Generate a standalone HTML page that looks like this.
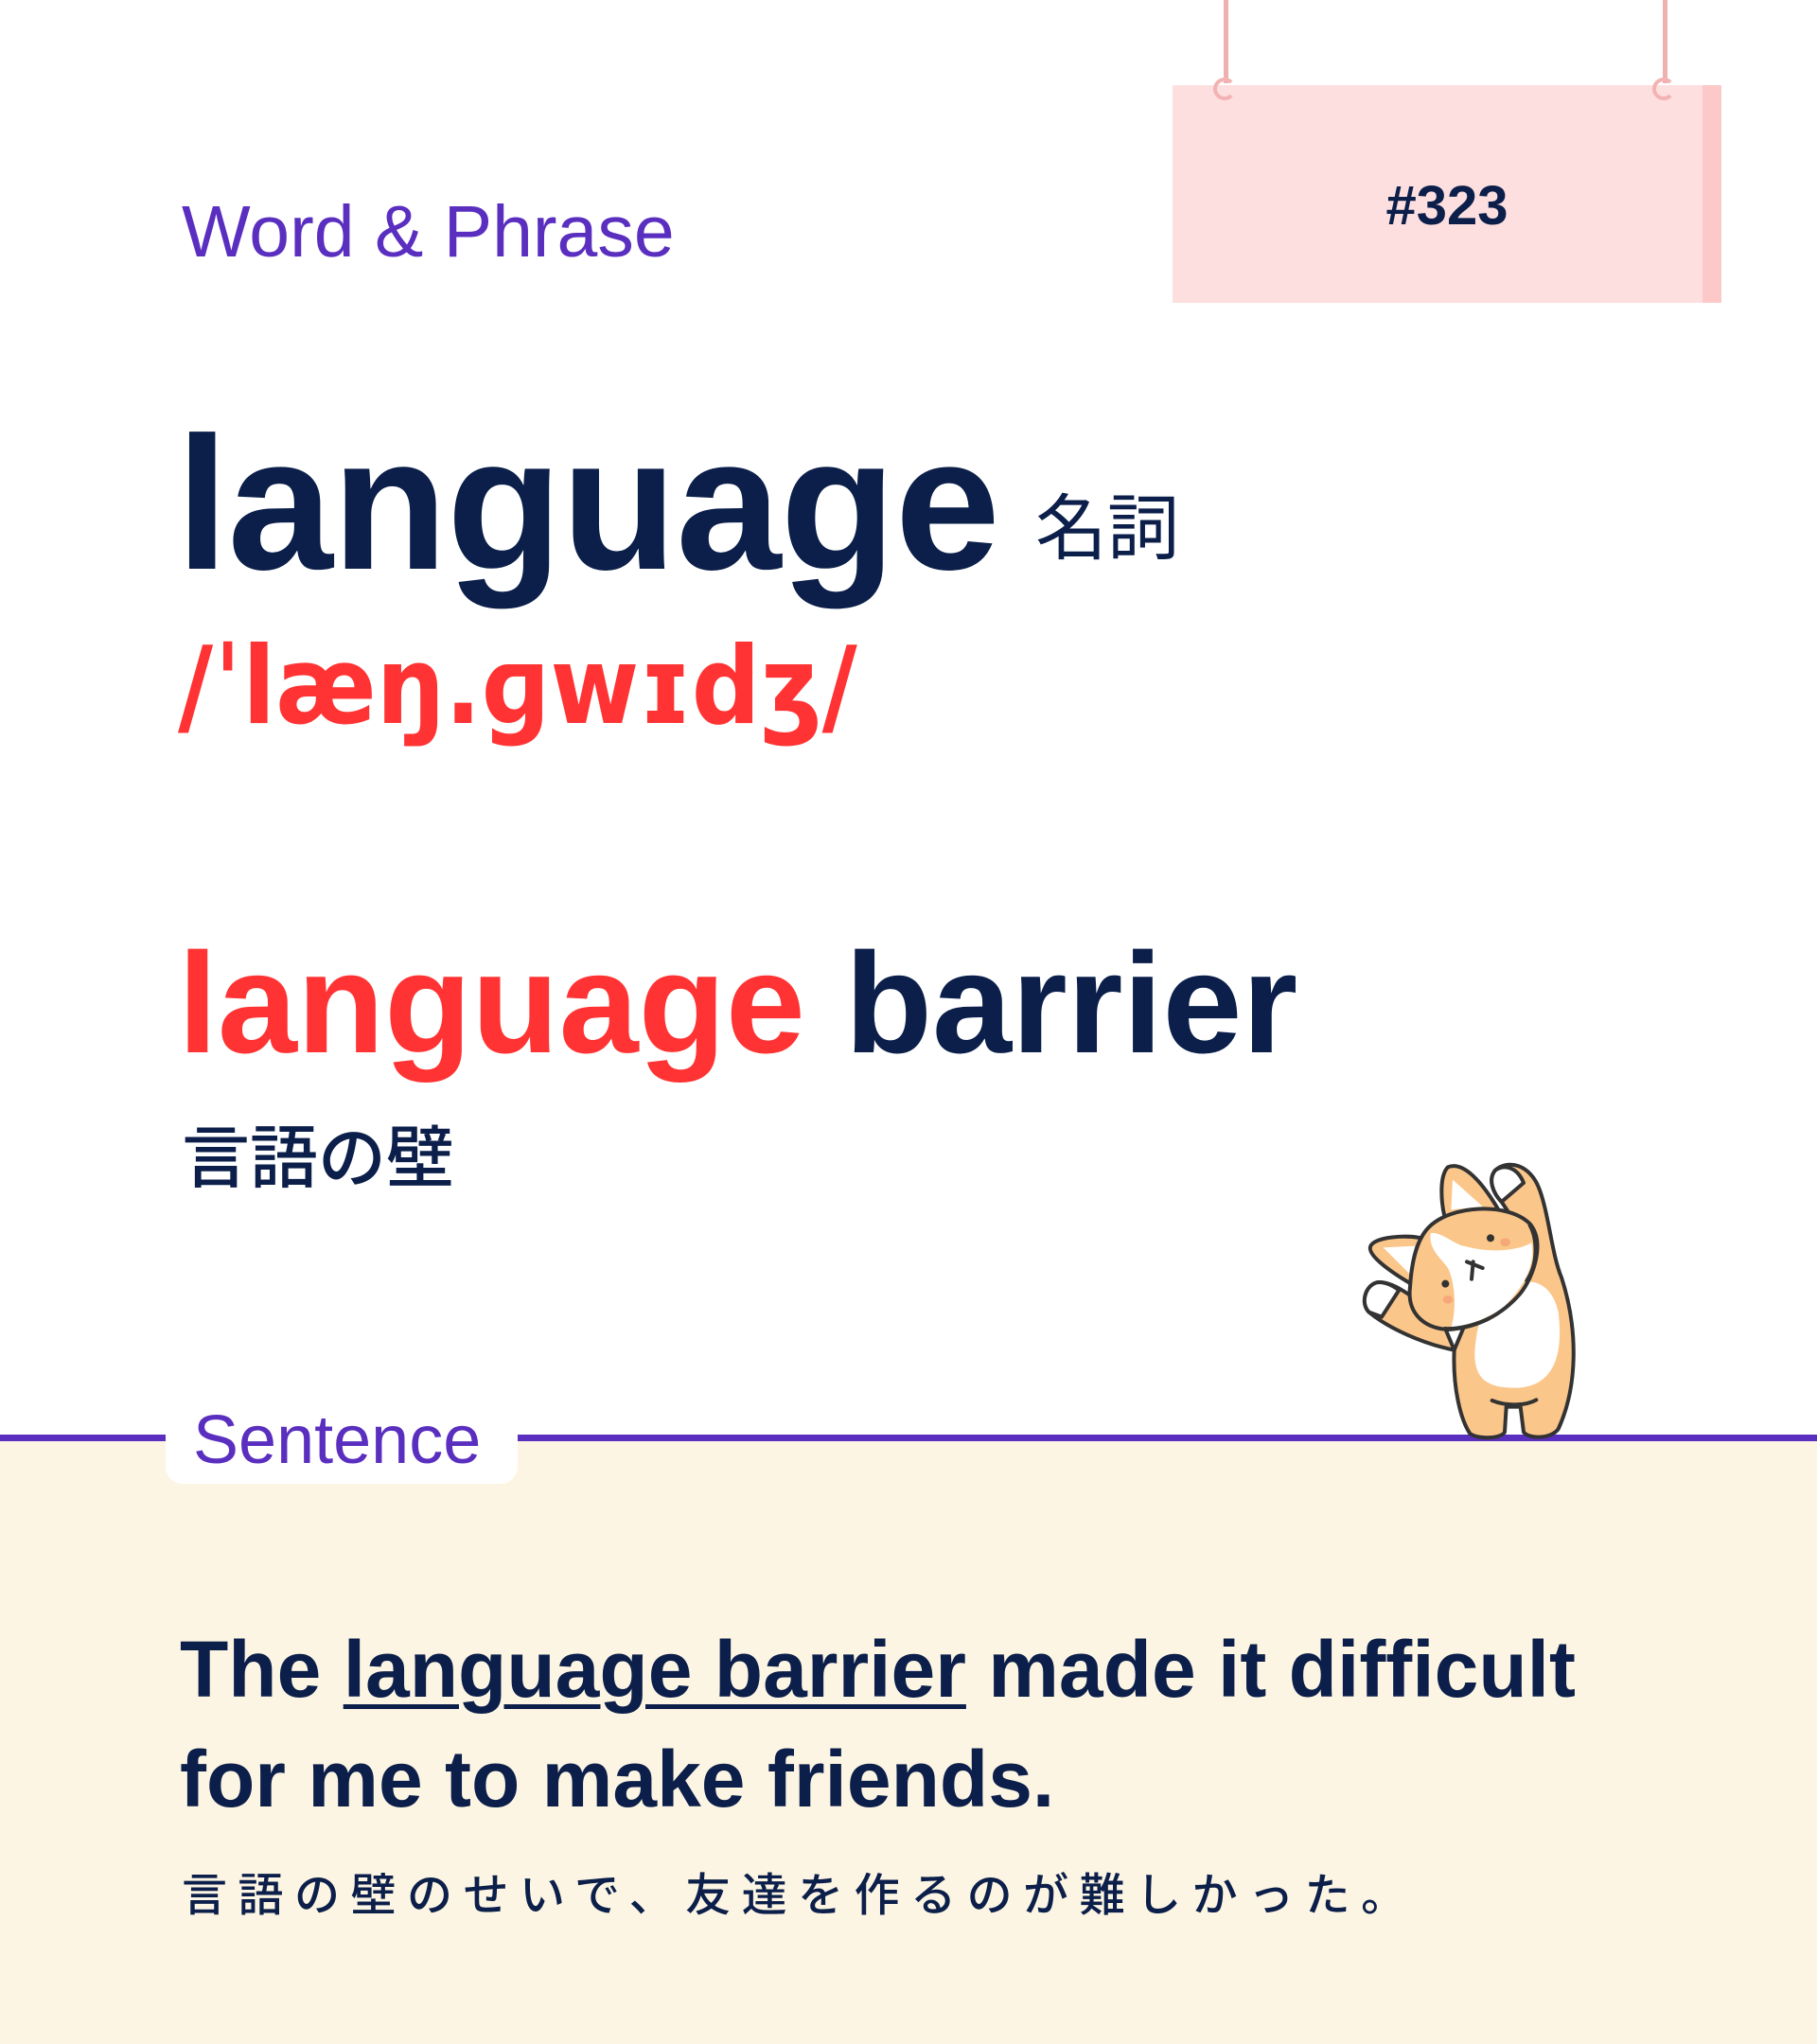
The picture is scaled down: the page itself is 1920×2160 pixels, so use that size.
<!DOCTYPE html>
<html><head><meta charset="utf-8"><style>
*{margin:0;padding:0;box-sizing:border-box}
body{width:1920px;height:2160px;background:#fff;position:relative;overflow:hidden;font-family:"Liberation Sans","Noto Sans CJK JP",sans-serif;color:#0b1f4a}
.a{position:absolute;white-space:nowrap}
</style></head><body>
<div class="a" style="left:0;top:1522px;width:1920px;height:638px;background:#fdf5e3"></div>
<div class="a" style="left:0;top:1516px;width:1920px;height:7px;background:#5a2fc0"></div>
<div class="a" style="left:175px;top:1480px;width:372px;height:88px;background:#fff;border-radius:0 0 18px 18px"></div>
<div class="a" style="left:204px;top:1478px;font-size:72px;color:#5a2fc0;line-height:88px">Sentence</div>

<div class="a" style="left:192px;top:200px;font-size:77px;color:#5a2fc0;line-height:90px">Word &amp; Phrase</div>

<div class="a" style="left:1293px;top:0;width:5px;height:88px;background:#efb0b0"></div>
<div class="a" style="left:1757px;top:0;width:5px;height:88px;background:#efb0b0"></div>
<div class="a" style="left:1239px;top:90px;width:580px;height:230px;background:#fddfe0"></div>
<div class="a" style="left:1799px;top:90px;width:20px;height:230px;background:#fcc8c8"></div>
<div class="a" style="left:1282px;top:82px;width:24px;height:24px;border:4px solid #f3b3b3;border-radius:50%;border-right-color:transparent"></div>
<div class="a" style="left:1746px;top:82px;width:24px;height:24px;border:4px solid #f3b3b3;border-radius:50%;border-right-color:transparent"></div>
<div class="a" style="left:1239px;top:180px;width:580px;text-align:center;font-size:58px;font-weight:bold;line-height:76px">#323</div>

<div class="a" style="left:186px;top:418px;font-size:200px;font-weight:bold;line-height:230px;letter-spacing:-1px">language</div>
<div class="a" style="left:1094px;top:515px;font-size:76px;line-height:90px">名詞</div>
<div class="a" style="left:188px;top:660px;font-size:113px;font-weight:bold;color:#ff3333;line-height:130px;font-family:'DejaVu Sans',sans-serif;font-stretch:condensed">/ˈlæŋ.ɡwɪdʒ/</div>

<div class="a" style="left:188px;top:975px;font-size:151px;font-weight:bold;line-height:170px"><span style="color:#ff3333">language</span> barrier</div>
<div class="a" style="left:192px;top:1180px;font-size:72px;line-height:90px;font-weight:500">言語の壁</div>

<div class="a" style="left:190px;top:1706px;font-size:84px;font-weight:bold;line-height:116px">The <span style="text-decoration:underline;text-decoration-thickness:5px;text-underline-offset:8px">language barrier</span> made it difficult<br>for me to make friends.</div>
<div class="a" style="left:192px;top:1972px;font-size:48px;line-height:64px;letter-spacing:11.5px;font-weight:500">言語の壁のせいで、友達を作るのが難しかった。</div>

<svg class="a" style="left:1420px;top:1200px" width="280" height="340" viewBox="0 0 840 1020">
<g stroke="#333" stroke-width="12" stroke-linejoin="round" stroke-linecap="round">
<path d="M350,680 C345,800 370,900 400,945 C430,965 500,960 510,940 L515,860 L560,860 L570,940 C590,965 660,960 680,930 C740,800 745,620 690,450 C660,380 650,250 620,170 C590,90 520,75 480,110 C455,140 475,185 500,210 L560,300 L400,560 Z" fill="#fbc68a"/>
<path d="M420,640 C400,760 440,800 540,800 C650,800 700,720 680,560 C660,470 600,450 540,470 C470,500 430,560 420,640Z" fill="#fff" stroke="none"/>
<path d="M480,110 C455,140 475,185 500,210 L570,150 C550,100 510,90 480,110Z" fill="#fff"/>
<path d="M350,680 C250,660 140,610 80,560 C50,530 70,470 110,465 C150,462 200,500 230,520 L300,560 Z" fill="#fbc68a"/>
<path d="M80,560 C50,530 70,470 110,465 C140,465 160,480 175,490 L120,575Z" fill="#fff"/>
<path d="M330,100 C300,130 310,220 320,260 L490,235 C440,150 380,80 330,100Z" fill="#fbc68a"/>
<path d="M345,140 L340,235 L440,225Z" fill="#fff" stroke="none"/>
<path d="M85,350 C100,320 200,315 245,325 L230,480 C160,440 70,380 85,350Z" fill="#fbc68a"/>
<path d="M125,355 L225,350 L215,445Z" fill="#fff" stroke="none"/>
<path d="M270,290 C340,220 520,210 590,280 C640,340 600,450 560,500 C500,570 420,610 330,615 C250,610 200,560 210,480 C215,400 230,330 270,290Z" fill="#fbc68a"/>
<path d="M275,310 C300,300 360,350 380,350 C450,370 540,370 595,340 C610,420 560,490 510,540 C460,580 400,600 340,610 C360,540 350,460 330,420 C300,380 270,360 275,310Z" fill="#fff" stroke="none"/>
<path d="M580,460 C620,400 610,320 590,285" fill="none"/>
<path d="M460,580 C420,600 360,615 320,612" fill="none"/>
<path d="M470,840 C520,860 580,855 610,838" fill="none"/>
<path d="M390,400 L440,420 M410,400 L405,455" fill="none"/>
</g>
<circle cx="465" cy="325" r="12" fill="#333"/><circle cx="322" cy="470" r="12" fill="#333"/>
<ellipse cx="512" cy="338" rx="16" ry="13" fill="#f6a878"/><ellipse cx="330" cy="520" rx="16" ry="13" fill="#f6a878"/>
</svg>
</body></html>
